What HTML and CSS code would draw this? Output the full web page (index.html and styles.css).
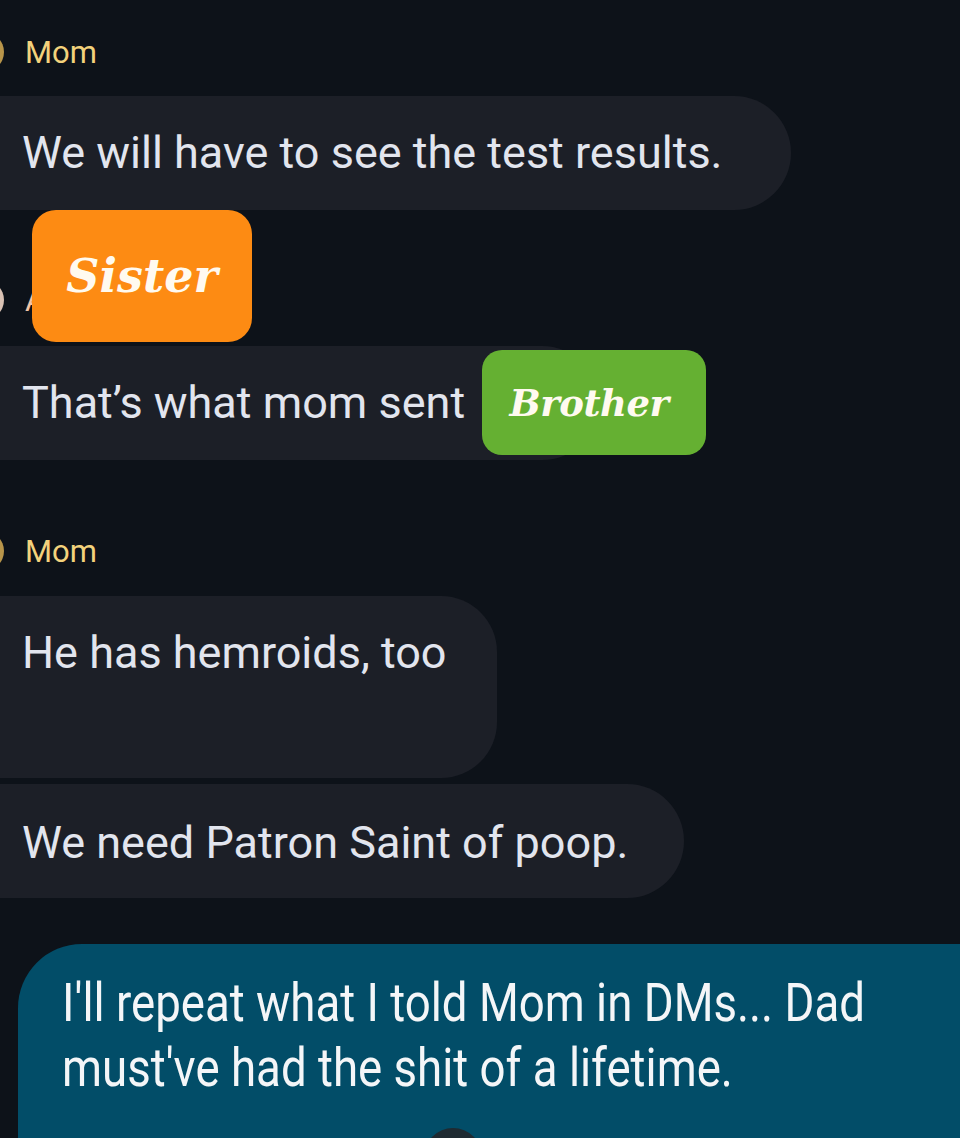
FILE: index.html
```html
<!DOCTYPE html>
<html>
<head>
  <title>Family chat</title>
  <link rel="stylesheet" href="styles.css">
</head>
<body>
  <div class="chat">
    <div class="sender sender-first">
      <span class="avatar"></span>
      <span class="name">Mom</span>
    </div>
    <div class="bubble bubble-one">We will have to see the test results.</div>

    <div class="sender sender-hidden">
      <span class="avatar avatar-light"></span>
      <span class="name name-peach">Aunt</span>
    </div>
    <div class="bubble bubble-two">That’s what mom sent</div>

    <div class="sender sender-second">
      <span class="avatar"></span>
      <span class="name">Mom</span>
    </div>
    <div class="bubble bubble-three">He has hemroids, too</div>
    <div class="bubble bubble-four">We need Patron Saint of poop.</div>

    <div class="own">
      <p class="own-text">I'll repeat what I told Mom in DMs... Dad must've had the shit of a lifetime.</p>
    </div>
  </div>

  <!-- name tags stuck on top of the screenshot -->
  <div class="tag tag-sister">Sister</div>
  <div class="tag tag-brother">Brother</div>
  <span class="reaction"></span>
</body>
</html>
```

FILE: styles.css
```css
html, body {
  margin: 0;
  height: 100%;
}
body {
  background-color: #0d1219;
  font-family: Roboto, "Noto Sans", sans-serif;
  overflow: hidden;
  position: relative;
}
.chat {
  display: flex;
  flex-direction: column;
  align-items: flex-start;
  padding-top: 30px;
}
.sender {
  display: flex;
  align-items: center;
  gap: 21px;
  height: 44px;
  margin-left: -36px;
}
.avatar {
  width: 40px;
  height: 40px;
  border-radius: 50%;
  background-color: #b8954a;
}
.avatar-light {
  background-color: #d9c2b4;
}
.name {
  color: #f3d27c;
  font-size: 31px;
}
.name-peach {
  color: #f1c4a6;
}
.sender-hidden {
  margin-top: 68px;
}
.sender-second {
  margin-top: 69px;
}
.bubble {
  background-color: #1c1f27;
  color: #e2e5ee;
  font-size: 45px;
  line-height: 54px;
  padding: 30px 69px 30px 62px;
  margin-left: -40px;
  border-radius: 0 57px 57px 0;
}
.bubble-one {
  margin-top: 22px;
}
.bubble-two {
  margin-top: 24px;
  padding-right: 134px;
}
.bubble-three {
  margin-top: 23px;
  height: 122px;
  padding-right: 50px;
  border-radius: 0 56px 56px 0;
}
.bubble-four {
  margin-top: 6px;
  padding-top: 32px;
  padding-bottom: 28px;
  padding-right: 56px;
}
.own {
  margin-top: 46px;
  margin-left: 18px;
  width: 1100px;
  height: 200px;
  background-color: #024d68;
  border-radius: 64px 64px 0 0;
  padding: 26px 0 0 44px;
  box-sizing: border-box;
}
.own-text {
  margin: 0;
  width: 980px;
  color: #f4f6f8;
  font-size: 54px;
  line-height: 65px;
  transform: scaleX(0.845);
  transform-origin: left top;
}
.tag {
  position: absolute;
  color: #fffaf0;
  font-family: "DejaVu Serif", "Liberation Serif", serif;
  font-weight: bold;
  font-style: italic;
  display: flex;
  align-items: center;
  justify-content: center;
}
.tag-sister {
  left: 32px;
  top: 210px;
  width: 220px;
  height: 132px;
  background-color: #fd8b13;
  border-radius: 24px;
  font-size: 46px;
}
.tag-brother {
  left: 482px;
  top: 350px;
  width: 224px;
  height: 105px;
  background-color: #65b032;
  border-radius: 20px;
  font-size: 37px;
  letter-spacing: -0.5px;
  padding-right: 10px;
  box-sizing: border-box;
}
.reaction {
  position: absolute;
  left: 424px;
  top: 1128px;
  width: 58px;
  height: 58px;
  border-radius: 50%;
  background-color: #1f2a31;
}
```
